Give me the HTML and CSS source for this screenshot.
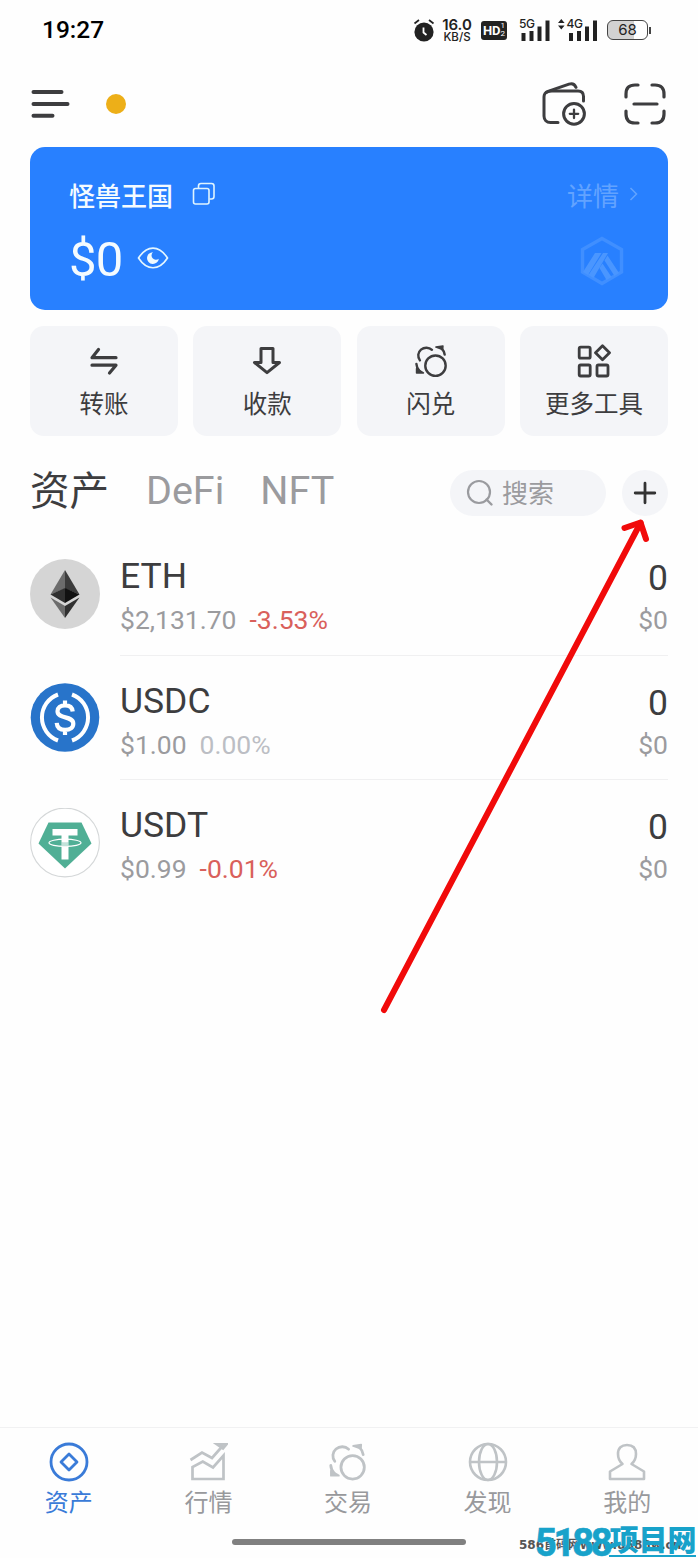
FILE: index.html
```html
<!DOCTYPE html>
<html lang="zh-CN">
<head>
<meta charset="utf-8">
<title>资产</title>
<link rel="stylesheet" href="styles.css">
</head>
<body>
<svg class="defs" aria-hidden="true">
  <symbol id="swap" viewBox="0 0 38 38">
    <g fill="none" stroke="currentColor" stroke-width="2.7" stroke-linecap="round" stroke-linejoin="round">
      <circle cx="24" cy="24.200" r="11.400"/>
      <path d="M6.600 18.300C3.800 14.500 4.200 9.300 7.800 6.300c3.700-3 8.900-2.800 12.300.2"/>
      <path d="M30.500 4.500C32.800 6.800 34 9 34.300 11.800"/>
      <path d="M24.500 3.400L32.300 2.200 32 6z" fill="currentColor" stroke-width="1.800"/>
      <path d="M2.700 22.300c.1 3 1.300 5.400 3.400 7.800"/>
      <path d="M2.900 27.500V32.300H10.500z" fill="currentColor" stroke-width="1.800"/>
    </g>
  </symbol>
</svg>
<main class="phone">
  <header class="status">
    <time class="clock">19:27</time>
    <div class="signals">
      <svg class="alarm" width="22" height="24" viewBox="0 0 22 24"><circle cx="11" cy="14" r="9.600" fill="#222"/><path d="M1.500 5.500L6 2M20.500 5.500L16 2" stroke="#222" stroke-width="1.700"/><path d="M10.500 9.500v5l3 2.500" fill="none" stroke="#fff" stroke-width="1.800"/></svg>
      <div class="speed"><b>16.0</b><span>KB/S</span></div>
      <div class="hd"><b>HD</b><span class="hd-n"><i>1</i><i>2</i></span></div>
      <svg class="bars" width="31" height="24" viewBox="0 0 31 24"><text x="0" y="10" class="net">5G</text><path d="M2.500 15h4v8h-4zM10.500 13h4v10h-4zM18.500 8.500h4V23h-4zM26.500 2.500h4V23h-4z" fill="#222"/></svg>
      <svg class="bars2" width="40" height="24" viewBox="0 0 40 24"><path d="M0 5l3.300-4 3.300 4zM0 7.500l3.300 4 3.300-4z" fill="#222"/><text x="8.500" y="10" class="net">4G</text><path d="M11 15h4v8h-4zM19 13h4v10h-4zM27 8.500h4V23h-4zM35 2.500h4V23h-4z" fill="#222"/></svg>
      <div class="battery"><span class="cell">68</span><span class="cap"></span></div>
    </div>
  </header>

  <div class="topbar">
    <svg width="40" height="30" viewBox="0 0 40 30"><path d="M2.500 3h28M2.500 15h34M2.500 26.700h19" stroke="#3d3d3f" stroke-width="4" stroke-linecap="round"/></svg>
    <span class="dot"></span>
    <svg class="wallet" width="46" height="46" viewBox="0 0 46 46"><g fill="none" stroke="#3d3d3f" stroke-width="3" stroke-linecap="round" stroke-linejoin="round"><path d="M17 41.500H9.500C5.500 41.500 3 39 3 35V16c0-3 1.500-4.800 4-5.700L28 3.200c3.500-1.200 5.500-.3 7 3.100"/><path d="M6 11.200c1-.9 2.500-1.200 5-1.200h26c3.500 0 5.500 2 5.500 5.500V20"/><circle cx="33" cy="32.800" r="10.400"/><path d="M28.800 32.800h8.400M33 28.600V37" stroke-width="2.300"/></g></svg>
    <svg class="scan" width="42" height="42" viewBox="0 0 42 42"><path d="M2 14v-3c0-6 3-9 9-9h3M28 2h3c6 0 9 3 9 9v3M40 28v3c0 6-3 9-9 9h-3M14 40h-3c-6 0-9-3-9-9v-3M10 21h23" fill="none" stroke="#3d3d3f" stroke-width="3.200" stroke-linecap="round"/></svg>
  </div>

  <section class="card">
    <div class="card-row">
      <b class="name">怪兽王国</b>
      <svg class="copy" width="24" height="24" viewBox="0 0 24 24"><g fill="none" stroke="#dff4ff" stroke-width="1.600"><rect x="1.500" y="6.500" width="15.500" height="15.500" rx="2"/><path d="M6.500 6V4c0-1.600.8-2.500 2.500-2.500h10.500c1.700 0 2.500.9 2.500 2.500v10.500c0 1.700-.8 2.500-2.500 2.500H17.500"/></g></svg>
      <span class="detail">详情</span>
      <svg class="chev" width="9" height="14" viewBox="0 0 9 14"><path d="M1.500 1l6 6-6 6" fill="none" stroke="#62a3ff" stroke-width="1.500"/></svg>
    </div>
    <div class="card-row balance-row">
      <span class="balance">$0</span>
      <svg class="eye" width="32" height="24" viewBox="0 0 32 24"><path d="M1.500 12C10-1.200 22-1.200 30.500 12 22 25 10 25 1.500 12z" fill="none" stroke="#e4f6ff" stroke-width="1.700" stroke-linejoin="round"/><path d="M16 6.200a5.900 5.900 0 1 0 5.800 6.500 3.800 3.800 0 0 1-5.800-6.500z" fill="#effaff"/></svg>
      <svg class="chain" width="46" height="50" viewBox="0 0 46 50"><path d="M23 2.500L42.500 13.500v22.500L23 47.500 3.500 36V13.500z" fill="none" stroke="#408fff" stroke-width="3.400"/><path d="M16 17h6.500L9 39l-5-3zM24 17h5L14.500 42l-5-3zM25.500 24.500l3-5L40 37l-4.500 3zM20.500 32l3-4.500 9 13.500-5 3z" fill="#4a96ff"/></svg>
    </div>
  </section>

  <section class="tools">
    <div class="tool"><svg width="34" height="34" viewBox="0 0 34 34"><path d="M11.500 5.500L5 13.700h24M5 21.200h24L22.500 29" fill="none" stroke="#3d3d3f" stroke-width="3.200" stroke-linecap="round" stroke-linejoin="round"/></svg><span>转账</span></div>
    <div class="tool"><svg width="34" height="34" viewBox="0 0 34 34"><path d="M11 4.500h12v14h6.500L17 28.700 4.500 18.500H11z" fill="none" stroke="#3d3d3f" stroke-width="3" stroke-linejoin="round"/></svg><span>收款</span></div>
    <div class="tool"><svg width="34" height="34"><use href="#swap"/></svg><span>闪兑</span></div>
    <div class="tool"><svg width="34" height="34" viewBox="0 0 34 34"><g fill="none" stroke="#3d3d3f" stroke-width="2.800" stroke-linejoin="round"><rect x="2.200" y="3.200" width="11" height="11" rx="1.500"/><rect x="2.200" y="21" width="11" height="11" rx="1.500"/><rect x="20" y="21" width="11" height="11" rx="1.500"/><path d="M25.500 1.700l7 7-7 7-7-7z"/></g></svg><span>更多工具</span></div>
  </section>

  <nav class="tabs">
    <span class="tab active">资产</span><span class="tab">DeFi</span><span class="tab">NFT</span>
    <div class="search"><svg width="28" height="28" viewBox="0 0 28 28"><circle cx="13" cy="13" r="11" fill="none" stroke="#9a9b9f" stroke-width="2.200"/><path d="M20.500 20.500l5 5" stroke="#9a9b9f" stroke-width="2.400" stroke-linecap="round"/></svg><span>搜索</span></div>
    <div class="add"><svg width="24" height="24" viewBox="0 0 24 24"><path d="M12 2.200v19.600M2.200 12h19.600" stroke="#333" stroke-width="2.800" stroke-linecap="round"/></svg></div>
  </nav>

  <section class="assets">
    <article class="asset">
      <svg class="coin" width="70" height="70" viewBox="0 0 70 70"><circle cx="35" cy="35" r="35" fill="#d5d5d5"/><path d="M35 11v18.500L20.500 35.500z" fill="#6c6c6c"/><path d="M35 11v18.500l14.500 6z" fill="#3b3b3b"/><path d="M20.500 35.500L35 29v15z" fill="#303030"/><path d="M49.500 35.500L35 29v15z" fill="#111"/><path d="M20.500 38.500L35 47v12z" fill="#6c6c6c"/><path d="M49.500 38.500L35 47v12z" fill="#303030"/></svg>
      <div class="asset-body"><div class="left"><span class="sym">ETH</span><span class="price">$2,131.70<em class="down">-3.53%</em></span></div><div class="right"><span class="qty">0</span><span class="val">$0</span></div></div>
    </article>
    <article class="asset">
      <svg class="coin" width="70" height="70" viewBox="0 0 70 70"><circle cx="35" cy="34.500" r="34.300" fill="#2874ca"/><path d="M28 11.500a24.500 24.500 0 0 0 0 46M42 11.500a24.500 24.500 0 0 1 0 46" fill="none" stroke="#fff" stroke-width="4"/><path d="M42.700 28.500c-.3-4-3-6.200-7.700-6.200-4.500 0-7.500 2.300-7.500 5.900 0 8.300 15.800 4 15.800 12.500 0 3.900-3.300 6.200-8.100 6.200-5.200 0-8.200-2.600-8.500-7M35 17.500v5M35 46v6" fill="none" stroke="#fff" stroke-width="4.200"/></svg>
      <div class="asset-body"><div class="left"><span class="sym">USDC</span><span class="price">$1.00<em class="flat">0.00%</em></span></div><div class="right"><span class="qty">0</span><span class="val">$0</span></div></div>
    </article>
    <article class="asset last">
      <svg class="coin" width="70" height="70" viewBox="0 0 70 70"><circle cx="35" cy="34.500" r="34.400" fill="#fff" stroke="#d4d7d8" stroke-width="1.100"/><path d="M18.500 14.500h33L61.500 35.500 35 60.500 8.500 35.500z" fill="#50af95"/><path d="M22.500 21h25v6.500h-9V51.500h-7V27.500h-9z" fill="#fff"/><ellipse cx="35" cy="34.800" rx="16" ry="3.600" fill="none" stroke="#fff" stroke-width="1.200"/><path d="M31.500 34q3.500.5 7 0v4q-3.500.4-7 0z" fill="#50af95" opacity=".35"/></svg>
      <div class="asset-body"><div class="left"><span class="sym">USDT</span><span class="price">$0.99<em class="down">-0.01%</em></span></div><div class="right"><span class="qty">0</span><span class="val">$0</span></div></div>
    </article>
  </section>

  <footer class="bottom">
    <div class="nav">
      <div class="item on"><svg width="40" height="40" viewBox="0 0 40 40"><g fill="none" stroke="currentColor" stroke-width="2.800" stroke-linejoin="round"><circle cx="20" cy="20" r="18"/><path d="M20 12l8 8-8 8-8-8z"/></g></svg><span>资产</span></div>
      <div class="item"><svg width="40" height="40" viewBox="0 0 40 40"><path d="M2.500 18L14 10.500l10 5.500L35 3.500M29 2.300h9.500L35 6.500zM4.500 37V25l10.300-5.500L25 25.500 35.500 13.500V37z" fill="none" stroke="currentColor" stroke-width="2.700"/></svg><span>行情</span></div>
      <div class="item"><svg width="39" height="40"><use href="#swap"/></svg><span>交易</span></div>
      <div class="item"><svg width="40" height="40" viewBox="0 0 40 40"><g fill="none" stroke="currentColor" stroke-width="2.600"><circle cx="20" cy="20" r="18"/><ellipse cx="20" cy="20" rx="9" ry="18"/><path d="M2 20h36"/></g></svg><span>发现</span></div>
      <div class="item"><svg width="40" height="40" viewBox="0 0 40 40"><path d="M15.500 22C12 19 11 15.500 11 12 11 6 14.500 3 20 3s9 3 9 9c0 3.500-1 7-4.500 10L37 29.500V37H3v-7.500z" fill="none" stroke="currentColor" stroke-width="2.600" stroke-linejoin="round"/></svg><span>我的</span></div>
    </div>
    <div class="home"></div>
  </footer>

  <svg class="arrow" width="280" height="510" viewBox="0 0 280 510"><path d="M11 499L267.500 12" fill="none" stroke="#f10a0a" stroke-width="6" stroke-linecap="round"/><path d="M251.500 17L267.500 11.500l5.500 16.500" fill="none" stroke="#f10a0a" stroke-width="6" stroke-linecap="round" stroke-linejoin="round"/></svg>
  <div class="under">586首码网www.u588w.cn</div>
  <div class="mark"><b class="num">5188</b><b class="han">项目网</b></div>
</main>
</body>
</html>
```
FILE: styles.css
```css
* { box-sizing: border-box; }
body { margin: 0; background: #fefefe; font-family: Roboto, "Noto Sans CJK SC", sans-serif; color: #3d3d3f; }
svg { display: block; flex: none; }
.defs { position: absolute; width: 0; height: 0; }
.phone { position: relative; width: 698px; height: 1558px; display: flex; flex-direction: column; overflow: hidden; }

.status { height: 60px; padding: 0 47px 0 42px; display: flex; justify-content: space-between; align-items: center; }
.clock { font: 500 24.500px/60px Roboto, sans-serif; color: #000; }
.signals { display: flex; align-items: center; color: #222; }
.speed { width: 32px; margin-left: 6px; display: flex; flex-direction: column; align-items: center; font-family: Inter, sans-serif; }
.speed b { font-size: 15px; line-height: 13px; font-weight: 600; }
.speed span { font-size: 11.500px; line-height: 12px; font-weight: 500; }
.hd { width: 26px; height: 19px; margin-left: 8px; border-radius: 3px; background: #222; color: #fff; display: flex; justify-content: center; align-items: center; font-size: 13px; line-height: 19px; }
.hd-n { display: flex; flex-direction: column; font-size: 8px; line-height: 8px; }
.hd-n i { font-style: normal; }
.bars { margin-left: 12px; overflow: visible; }
.bars2 { margin-left: 8px; overflow: visible; }
.net { font: 500 12px Inter, sans-serif; fill: #222; letter-spacing: -.5px; }
.battery { margin-left: 9px; display: flex; align-items: center; }
.cell { width: 41px; height: 20px; border: 1.500px solid #444; border-radius: 6px; background: linear-gradient(90deg, #d2d2d2 66%, #fff 66%); font: 15px/18px Inter, sans-serif; text-align: center; }
.cap { width: 2px; height: 7px; margin-left: 1px; background: #444; }

.topbar { height: 87px; padding: 1px 32px 1px 31px; display: flex; align-items: center; }
.dot { width: 20px; height: 20px; margin-left: 35px; border-radius: 50%; background: #edaf18; }
.wallet { margin-left: auto; }
.scan { margin-left: 37px; }

.card { height: 163px; margin: 0 30px; padding: 26px 30px 0 39px; border-radius: 15px; background: #2880ff; color: #f4fbff; }
.card-row { height: 44px; display: flex; align-items: center; }
.name { font-size: 26px; line-height: 44px; font-weight: 500; margin-top: 3px; }
.copy { margin: -2px 0 0 19px; }
.detail { margin: 4px 0 0 auto; font-size: 26px; line-height: 44px; color: #62a3ff; }
.chev { margin: -2px 0 0 10px; }
.balance-row { height: 60px; margin-top: 13px; }
.balance { font-size: 49px; line-height: 60px; letter-spacing: -.8px; }
.eye { margin: -5px 0 0 15px; }
.chain { margin: 1px 13px 0 auto; }

.tools { height: 110px; margin: 16px 30px 0; display: grid; grid-template-columns: repeat(4, 1fr); gap: 15.500px; }
.tool { padding-top: 18px; border-radius: 14px; background: #f4f5f8; display: flex; flex-direction: column; align-items: center; font-size: 24.500px; line-height: 36px; gap: 9px; }

.tabs { height: 95px; margin: 0 30px; padding-top: 18px; display: flex; align-items: center; }
.tab { font-size: 39.500px; line-height: 60px; color: #9b9b9e; margin-left: 36px; margin-top: -4px; }
.tab.active { margin: -1px 1px 0 0; color: #3d3d3f; }
.search { width: 156px; height: 46px; margin-left: auto; padding-left: 16px; border-radius: 23px; background: #f4f5f8; display: flex; align-items: center; gap: 8px; font-size: 26px; line-height: 46px; color: #9b9b9e; }
.search span { margin-top: 3px; }
.add { width: 46px; height: 46px; margin-left: 16px; border-radius: 50%; background: #f4f5f8; display: flex; align-items: center; justify-content: center; }

.assets { margin: 0 30px; }
.asset { height: 124.500px; display: flex; }
.coin { margin: 27.500px 20px 0 0; }
.asset-body { flex: 1; display: flex; justify-content: space-between; border-bottom: 1px solid #f0f0f1; }
.last .asset-body { border: 0; }
.left, .right { display: flex; flex-direction: column; }
.left { padding-top: 23px; }
.left span { line-height: 44px; }
.right { padding-top: 27px; align-items: flex-end; }
.right span { line-height: 41px; }
.sym, .qty { font-size: 35.500px; }
.price, .val { font-size: 26.500px; color: #9b9b9e; }
.price em { margin-left: 13px; font-style: normal; }
.price .down { color: #d9605b; }
.price .flat { color: #bcbec4; }

.bottom { margin-top: auto; height: 131px; border-top: 1.500px solid #f1f1f2; }
.nav { height: 90px; display: grid; grid-template-columns: repeat(5, 1fr); margin: 0 1px 0 -1px; }
.item { padding-top: 14px; display: flex; flex-direction: column; align-items: center; color: #bfc3c6; font-size: 24px; line-height: 36px; gap: 3px; }
.item span { color: #98999c; }
.item.on, .item.on span { color: #3a7bd8; }
.home { width: 234px; height: 6px; margin: 21px auto 0; border-radius: 3px; background: #808080; }

.arrow { position: absolute; left: 373px; top: 511px; }
.under { position: absolute; left: 519px; top: 1536px; font: bold 12px/18px "DejaVu Sans", "Noto Sans CJK SC", sans-serif; color: #555; white-space: nowrap; }
.mark { position: absolute; left: 535px; top: 1525px; display: flex; color: #18a2ca; line-height: 36px; white-space: nowrap; }
.num { font-size: 38px; font-weight: 700; letter-spacing: -3.200px; -webkit-text-stroke: .6px #18a2ca; }
.han { font-size: 29px; font-weight: 900; border-bottom: 2px solid #18a2ca; height: 32px; line-height: 32px; }
```
